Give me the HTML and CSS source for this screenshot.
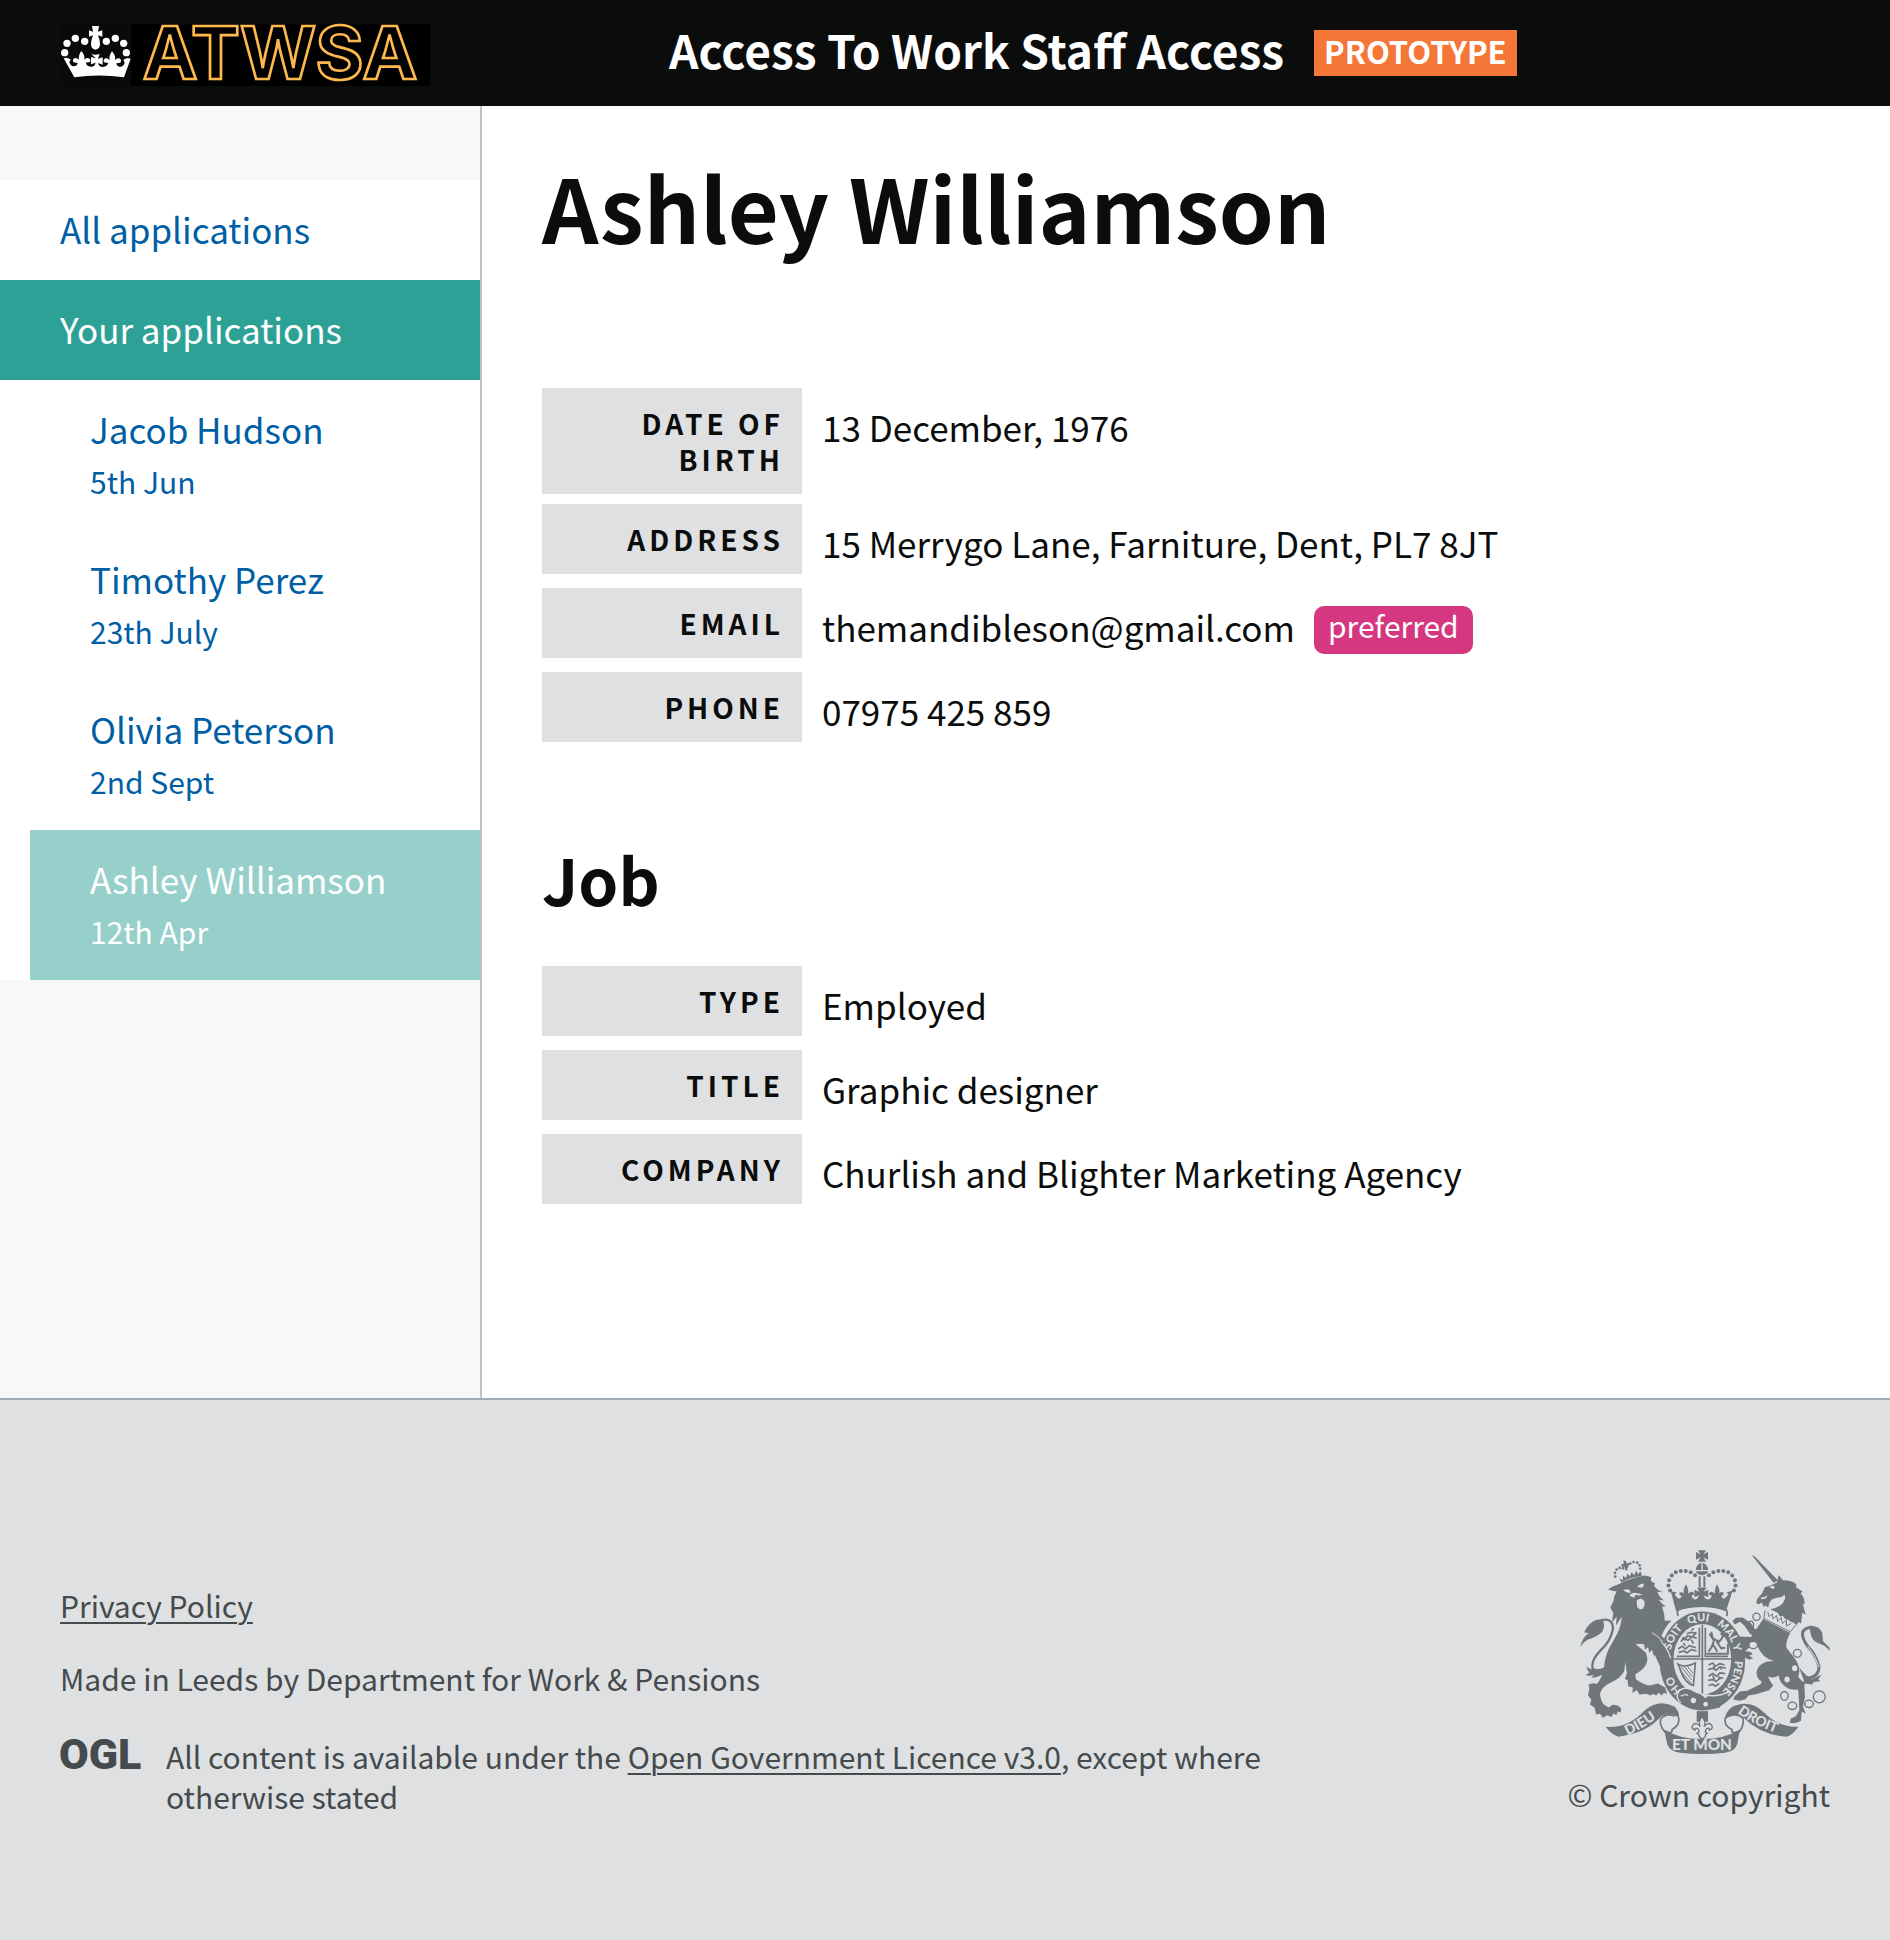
FILE: index.html
```html
<!DOCTYPE html>
<html lang="en">
<head>
<meta charset="utf-8">
<meta name="viewport" content="width=device-width, initial-scale=1">
<title>Ashley Williamson - Access To Work Staff Access</title>
<link rel="stylesheet" href="styles.css">
</head>
<body>
<header class="site-header">
  <a class="logo" href="#" aria-label="ATWSA home">
    <svg class="logo-art" viewBox="60 72 1110 186" aria-hidden="true">
      <rect x="60" y="72" width="213" height="186" fill="#0a0a0a"/>
      <rect x="273" y="72" width="897" height="186" fill="#000"/>
      <g fill="#fff">
        <circle cx="74" cy="158" r="11"/><circle cx="81" cy="130" r="11"/><circle cx="106" cy="115" r="11"/><circle cx="134" cy="124" r="11"/>
        <circle cx="199" cy="124" r="11"/><circle cx="226" cy="115" r="11"/><circle cx="251" cy="130" r="11"/><circle cx="259" cy="158" r="11"/>
        <path d="M156 78h21l-3 17 13-4v19l-13-4q6 14 6 27 0 15-14 16-13-1-13-16 0-13 6-27l-12 4V91l12 4z"/>
        <path d="M154 162q12 4 25 0l-5 14 14-4v22l-14-5q3 12 14 12 14-1 17-12l-13-2q-4-10 6-12 7 0 11 6-3-14 7-27 12 13 9 27 4-7 12-6 10 4 4 13l-12 2q2 11 12 10 10-1 13-12l-4-9 12-5 10 2-20 56q-76-11-149 0L71 175l9-2 12 5-4 9q4 12 13 12 10 0 12-10l-12-2q-6-9 4-13 8 0 12 6-3-14 7-27 12 13 9 27 4-7 11-6 10 3 6 12l-13 2q4 12 17 12 10 0 13-12l-14 5v-22l14 4z"/>
      </g>
      <text class="logo-word" x="720" y="238" text-anchor="middle">ATWSA</text>
    </svg>
  </a>
  <div class="service">
    <span class="service-name">Access To Work Staff Access</span>
    <strong class="phase-tag">PROTOTYPE</strong>
  </div>
</header>

<div class="layout">
  <aside class="sidebar">
    <nav class="nav" aria-label="Applications">
      <a class="nav-link" href="#">All applications</a>
      <a class="nav-link nav-link-current" href="#">Your applications</a>
      <ul class="nav-people">
        <li><a class="person" href="#"><span class="person-name">Jacob Hudson</span><span class="person-date">5th Jun</span></a></li>
        <li><a class="person" href="#"><span class="person-name">Timothy Perez</span><span class="person-date">23th July</span></a></li>
        <li><a class="person" href="#"><span class="person-name">Olivia Peterson</span><span class="person-date">2nd Sept</span></a></li>
        <li><a class="person person-current" href="#" aria-current="page"><span class="person-name">Ashley Williamson</span><span class="person-date">12th Apr</span></a></li>
      </ul>
    </nav>
  </aside>

  <main class="content">
    <h1 class="title">Ashley Williamson</h1>
    <dl class="details">
      <div class="row"><dt>Date of birth</dt><dd>13 December, 1976</dd></div>
      <div class="row"><dt>Address</dt><dd>15 Merrygo Lane, Farniture, Dent, PL7 8JT</dd></div>
      <div class="row"><dt>Email</dt><dd>themandibleson@gmail.com <span class="badge">preferred</span></dd></div>
      <div class="row"><dt>Phone</dt><dd>07975 425 859</dd></div>
    </dl>
    <h2 class="subtitle">Job</h2>
    <dl class="details">
      <div class="row"><dt>Type</dt><dd>Employed</dd></div>
      <div class="row"><dt>Title</dt><dd>Graphic designer</dd></div>
      <div class="row"><dt>Company</dt><dd>Churlish and Blighter Marketing Agency</dd></div>
    </dl>
  </main>
</div>

<footer class="footer">
  <div class="footer-main">
    <p class="footer-line"><a href="#">Privacy Policy</a></p>
    <p class="footer-line">Made in Leeds by Department for Work &amp; Pensions</p>
    <div class="licence">
      <svg class="ogl" viewBox="0 0 81 34" aria-hidden="true">
        <text class="ogl-word" x="-1" y="33">OGL</text>
      </svg>
      <p>All content is available under the <a href="#">Open Government Licence v3.0</a>, except where otherwise stated</p>
    </div>
  </div>
  <a class="copyright" href="#">
    <svg class="crest" viewBox="90 58 750 614" aria-hidden="true">
      <defs>
        <path id="garter" d="M457 508A98 118 0 0 1 457 272A98 118 0 0 1 457 508"/>
        <path id="band-left" d="M232 616Q290 590 340 548"/>
        <path id="band-right" d="M562 548Q616 588 706 618"/>
      </defs>

      <!-- lion -->
      <g transform="translate(75 60)">
        <path class="ink" d="M132 84l6 12q28-18 62-20l-3-14-9 8-5-10-6 14-8-9-5 13-7-9-5 14-8-8-2 14z"/>
        <g class="ink"><circle cx="120" cy="78" r="4"/><circle cx="119" cy="67" r="4"/><circle cx="124" cy="57" r="4"/><circle cx="133" cy="52" r="4"/><circle cx="143" cy="53" r="4"/><circle cx="155" cy="49" r="4"/><circle cx="165" cy="39" r="4"/><circle cx="175" cy="34" r="4"/><circle cx="186" cy="36" r="4"/><circle cx="193" cy="44" r="4"/><circle cx="195" cy="54" r="4"/></g>
        <path class="ink" d="M144 29l8 2 1 7 8-1v8l-7 2 3 12-6 1-4-12-7 2-2-8 8-3z"/>
        <path class="ink" d="M113 107q12-3 22-8 32-18 74-24l19 4-1 12 13 8-4 6q10 14 27 20l-17-1q6 16 20 26l-15-2q9 14 21 19l-11 2 6 22 2 20 20-1q-20 20-30 47l14 12q14 22 12 44l6 16-8-2-4 12-9-8-7 16-6-13-10 2 5-14-8 2 2-14-10 6-6-18-8 10-3-18-10 8-2-16q-14-4-26 0l30 24q10 20 2 36-10 18-33 30l2 14q18 16 42 20l24-6 22 12 6 20-10-4-6 8-9-8-8 8-10-5-6 5-14-5-20 2-8-13-14 8 2-16-14-4-2-18-8-4 6-16-5-34-3 26q-10 22-43 36-26 12-30 34 2 20 12 32l14 8 12-8 16 2 10 10-2 12-8-5-5 12-9-6-5 12-14-6-12 8-9-12-12 2-4-20-14-10 4-14-10-14 4-18-2-14q14-6 24-2 16-16 22-48 2-30 14-56l26-48q10-18 14-50l-18 26 2-26-14 16 4-28-9-16 9-18q2-18 10-30-14-2-26-6z"/>
        <path class="ink" d="M15 291q4-28 25-43l-14-2q14-30 38-38l20 4q6 20-5 34-20 16-43 22-14 8-21 23z"/>
        <path class="line" stroke-width="7" d="M66 212Q114 196 113 236 106 272 78 298 42 334 54 360q26 4 50-18"/>
        <path class="ink" d="M34 348q10 14 22 6 22 12 42-6l2 14q-20 14-36 18l-16 3 7-9q-14 5-25 0 9-3 12-8-8-6-8-18z"/>
        <path class="paper" d="M144 119q12-5 20 0l2 8q-12 1-22-8zM186 108q9-9 20-9l-1 9q-8 7-19 0zM184 151q6-8 16-6l8 8q2 12-4 21-10 6-18-4zM163 136q6-12 24-8l16 5-12 2-9-2-6 9z"/>
        <path class="gap" stroke-width="3" d="M230 247q34 18 50 54"/>
      </g>

      <!-- unicorn -->
      <g transform="translate(570 60)">
        <path class="ink" d="M36 14l8 3 70 72-12 8zM112 95l5-22 12 16q32 0 42 14l-3 6 20 13-5 8q14 14 11 32l-5-2 9 33-10-6-4 32-8-4-6 12-10-12-8 6-6-14-8 4-8-14-10 2-6-12-22-10q24-8 36-18 10-12 7-26-8 8-24 9l-14 4-8 10-4 16-8-8-5 6-6-14-10 6-7-6 4-12 14-16 8-18 20-6z"/>
        <path class="paper" d="M88 110q10-6 17-2l-4 8q-6-4-13-6zM62 142l14-3 8-7-6 12-12 2z"/>
        <path class="gap" stroke-width="4" d="M102 172q32-10 32-36"/>
        <path class="paper" d="M78 174l94 50-18 26-84-42z"/>
        <path class="line" stroke-width="3" d="M76 180l-4 24 80 40 16-20M84 184l4 15 9-9 3 16 10-11 4 18 10-12 4 18 12-10v18l14-8"/>
        <path class="ink" d="M70 206l82 42q-14 22-12 44l20 26q18 20 19 44l-3 18 12 14h10l-4 12 2 34-6 30 8 20-12-6-2 28q-16 10-34 6l3-12 16-8 10-18-2-40-2-22q-26 4-44-14-14-12-13-28-20 10-34 2l8 16 8 12-12 14-40 12-22 4-10 12-18 4-18-4 4-10 16-14 22-2 40-20 4-8q-16-8-16-28 4-24 30-32l22-2q-34-8-50-46l-26 8-10 8 18 4 4 6-10 4 12 8-12 4-16-8-8-22-16-20-10-14 16-6 40 2z"/>
        <path class="ink" d="M56 258l-24-6-18-26-14-12-16 8-6-10 10-10 20-1 24 16 12 18 16 4z"/>
        <path class="line" stroke-width="9" d="M200 384q38-2 38-36-10-36-34-60-34-50 6-57"/>
        <path class="gap" stroke-width="3" d="M238 350q-8-30-34-62"/>
        <path class="ink" d="M208 226q30-2 40 22l2 24 20 20v9q-14-16-28-20-28-8-30-36zM178 352l22 24 18 10 28-13-10 14 6 6-20 2-4 8-22-3z"/>
        <g class="line" stroke-width="4"><ellipse cx="50" cy="199" rx="11" ry="11"/><ellipse cx="33" cy="224" rx="8" ry="12"/><ellipse class="ringed" cx="40" cy="284" rx="13" ry="11"/><ellipse class="ringed" cx="173" cy="309" rx="12" ry="12"/><ellipse cx="134" cy="437" rx="11" ry="13"/><ellipse cx="158" cy="467" rx="13" ry="11"/><ellipse cx="208" cy="461" rx="13" ry="11"/><circle cx="239" cy="440" r="18"/></g>
        <ellipse class="paper" cx="165" cy="354" rx="8" ry="9"/><ellipse class="paper" cx="142" cy="388" rx="8" ry="9"/>
      </g>

      <!-- imperial crown -->
      <g transform="translate(300 45)">
        <path class="ink" d="M144 14h24l-8 12 14-7v23l-14-7 8 13h-24l8-13-14 7V19l14 7zM137 73q2-18 17-22v22zM158 51q14 4 17 22h-17zM137 77h38q-4 11-19 12-15-1-19-12z"/>
        <path class="line" stroke-width="6" d="M149 92v32M163 92v32"/>
        <g class="ink"><circle cx="135" cy="89" r="6"/><circle cx="122" cy="80" r="6"/><circle cx="107" cy="76" r="6"/><circle cx="92" cy="76" r="6"/><circle cx="77" cy="80" r="6"/><circle cx="65" cy="90" r="6"/><circle cx="57" cy="104" r="6"/><circle cx="55" cy="120" r="6"/><circle cx="60" cy="135" r="6"/>
        <circle cx="177" cy="89" r="6"/><circle cx="190" cy="80" r="6"/><circle cx="205" cy="76" r="6"/><circle cx="220" cy="76" r="6"/><circle cx="235" cy="80" r="6"/><circle cx="247" cy="90" r="6"/><circle cx="255" cy="104" r="6"/><circle cx="257" cy="120" r="6"/><circle cx="252" cy="135" r="6"/></g>
        <path class="ink" d="M142 126h28l-9 13 14-6v22l-14-5q4 12 14 12 9-2 10-12l-8-2q0-10 9-9l9 5q-2-12 6-28 10 16 7 28 6-7 12-3 4 8-6 10 2 10 10 8l12-12-6-6 18-6-20 62q-74-26-150 0l-16-60 18 4-6 6 10 12q9 2 11-8-10-2-6-10 7-3 12 3-3-12 7-28 9 16 6 28l9-5q9-1 9 9l-8 2q2 10 10 12 9 0 13-12l-14 5v-22l14 6z"/>
        <path class="line" stroke-width="5" d="M84 212q-8-22 14-24 58-12 116 0 24 2 16 24"/>
      </g>

      <!-- garter and shield -->
      <ellipse class="ink" cx="457" cy="392" rx="129" ry="149"/>
      <path class="gap" stroke-width="4" d="M326 330q24 16 36 54"/>
      <ellipse class="paper" cx="457" cy="387" rx="87" ry="106"/>
      <path class="line" stroke-width="5" d="M457 282v212M370 386h175M380 378h68V292M466 292v86h68"/>
      <g class="line" stroke-width="5">
        <path d="M392 334l10-12 12 8 12-12 14 6M396 322l8 6 8-12 14 4 12-12M384 356l12-8 10 8 12-10 20 6M386 366l16-4 8 6 14-10 16 4M400 338l6 8M424 328l6 12M410 310l12-4 18 2M424 300l8-6"/>
        <path d="M476 404l12-6 8 10 14-8 14 4M474 418l14-4 10 6 12-10 18 4M476 438l12-8 12 8 10-10 16 2M474 450l14-2 10 6 14-12 8 2M476 466l12-4 8 6 12-8M490 408l4 8M512 408l2 10M488 436l6 12M506 438l4 10"/>
        <path stroke-width="6" d="M478 310l14 20-6 18-10 16M484 304l4 20 20 10 12-16-8-10M500 334l14 20 12-2M488 340l14 24M470 370h64V340"/>
        <path d="M384 402q22 12 52-4l-6 68q-28-8-42-56z"/>
        <path stroke-width="3" d="M394 410l32 40M402 408l24 30M412 408l16 20M392 422l32 38"/>
      </g>
      <g class="motto">
        <text><textPath href="#garter" startOffset="96" text-anchor="middle">HO</textPath></text>
        <text><textPath href="#garter" startOffset="238" text-anchor="middle">SOIT</textPath></text>
        <text><textPath href="#garter" startOffset="328" text-anchor="middle">QUI</textPath></text>
        <text><textPath href="#garter" startOffset="434" text-anchor="middle">MAL Y</textPath></text>
        <text><textPath href="#garter" startOffset="562" text-anchor="middle">PENSE</textPath></text>
      </g>
      <path class="ink" d="M386 486q10-16 32-10 50 32 112 12l-20 44q-50 14-116-12-14-16-8-34z"/>
      <path class="gap" stroke-width="4" d="M392 518q-18-18-6-34 12-16 38-6 56 34 116 6M392 498q14-8 22-2"/>
      <path class="paper" d="M452 492l28 2-14 10z"/>
      <circle class="paper" cx="430" cy="511" r="8"/><circle class="paper" cx="467" cy="522" r="7"/>

      <!-- lion's forepaw over the garter -->
      <path class="ink" d="M300 310q40 20 54 62l12 32-10-2-2 14-10-10-8 12-8-14-14-30z"/>

      <!-- motto ribbon -->
      <path class="ink" d="M440 543h34v32h-34z"/>
      <path class="line fleur" stroke-width="4" d="M456 560q14 14 6 30 10-16 22-6 8 12-6 16 2-6-4-6-8 2-8 12l6 4-6 4q2 8-10 12-10-4-9-12l-6-4 6-4q0-10-8-12-6 0-4 6-14-4-6-16 12-10 22 6-8-16 5-30z"/>
      <path class="ink" d="M166 590q66 6 118-50 44-36 90-10 16 18 12 34-20-22-52-6-44 52-130 62-22-8-38-30z"/>
      <path class="ink" d="M746 590q-60 2-104-44-46-42-98-14-20 18-18 36 24-24 52-8 56 56 132 60 18-4 36-30z"/>
      <path class="line" stroke-width="5" d="M386 562q4 24-20 36 2 14-22 8-18-22-12-40 16-18 42-8M526 562q-6 24 20 36-4 14 22 8 14-18 12-40-16-18-42-8"/>
      <path class="ink" d="M342 598q50 30 114 29 64 1 114-29l-8 44q-6 22-36 26-70 8-136 0-30-4-38-24z"/>
      <g class="band">
        <text><textPath href="#band-left">DIEU</textPath></text>
        <text><textPath href="#band-right">DROIT</textPath></text>
        <text x="456" y="661" text-anchor="middle" class="band-mid">ET MON</text>
      </g>
    </svg>
    <span>© Crown copyright</span>
  </a>
</footer>
</body>
</html>
```
FILE: styles.css
```css
* {
  box-sizing: border-box;
}

body {
  margin: 0;
  min-height: 100vh;
  display: flex;
  flex-direction: column;
  background: #fff;
  color: #0b0c0c;
  font-family: "Noto Sans CJK SC", "Noto Sans", sans-serif;
  font-size: 35px;
  line-height: 50px;
}

p,
dl,
dd,
ul,
h1,
h2 {
  margin: 0;
  padding: 0;
}

svg {
  overflow: visible;
}

/* Header */
.site-header {
  display: grid;
  grid-template-columns: 609px 1fr;
  align-items: start;
  padding: 24px 60px 20px;
  background: #0b0c0c;
  color: #fff;
}

.logo,
.logo-art {
  display: block;
}

.logo-art {
  width: 370px;
  height: 62px;
}

.logo-word {
  fill: #000;
  stroke: #ffb84d;
  stroke-width: 8px;
  font-family: Inter, sans-serif;
  font-size: 220px;
  font-weight: 700;
}

.service {
  display: flex;
  align-items: flex-start;
  gap: 30px;
}

.service-name {
  font-size: 46px;
  font-weight: 700;
}

.phase-tag {
  margin-top: 6px;
  padding: 0 10px 4px;
  background: #f47738;
  font-size: 31px;
  font-weight: 700;
  line-height: 42px;
}

/* Page columns */
.layout {
  flex: 1;
  display: flex;
}

.sidebar {
  flex: 0 0 482px;
  padding-top: 74px;
  border-right: 2px solid #bfc1c3;
  background: #f8f8f8;
}

.nav {
  background: #fff;
}

.nav-link,
.person {
  display: block;
  color: #005ea5;
  text-decoration: none;
}

.nav-link {
  padding: 24px 60px 26px;
}

.nav-link-current {
  background: #2ea196;
  color: #fff;
}

.nav-people {
  padding-left: 30px;
  list-style: none;
}

.person {
  padding: 24px 60px 22px;
}

.person-current {
  background: #97d0cb;
  color: #fff;
}

.person-name,
.person-date {
  display: block;
}

.person-date {
  font-size: 30px;
  line-height: 54px;
}

.content {
  flex: 1;
  padding: 50px 60px 180px;
}

.title {
  margin-bottom: 132px;
  font-size: 88px;
  font-weight: 700;
  line-height: 100px;
}

.subtitle {
  margin: 82px 0 48px;
  font-size: 64px;
  font-weight: 700;
  line-height: 80px;
}

.row {
  display: flex;
  align-items: flex-start;
  min-height: 84px;
}

dt {
  flex: 0 0 260px;
  margin: 0 20px 10px 0;
  padding: 17px 18px 17px 20px;
  background: #dee0e2;
  font-size: 28px;
  font-weight: 700;
  letter-spacing: 4px;
  line-height: 36px;
  text-align: right;
  text-transform: uppercase;
}

dd {
  display: flex;
  align-items: flex-start;
  gap: 19px;
  padding: 14px 0 18px;
}

.badge {
  margin-top: 4px;
  padding: 0 14px 10px;
  border-radius: 10px;
  background: #d53880;
  color: #fff;
  font-size: 30px;
  line-height: 38px;
}

/* Footer */
.footer {
  display: flex;
  align-items: flex-start;
  justify-content: space-between;
  padding: 150px 60px 124px;
  border-top: 2px solid #a1acb2;
  background: #dee0e2;
  color: #454a4c;
  font-size: 30px;
  line-height: 40px;
}

.footer a {
  color: inherit;
  text-decoration-thickness: 2px;
  text-underline-offset: 4px;
}

.footer-main {
  flex: 0 1 1270px;
  padding-top: 35px;
}

.footer-line {
  margin-bottom: 33px;
}

.licence {
  display: flex;
  align-items: flex-start;
  gap: 25px;
  padding-top: 5px;
}

.ogl {
  flex: none;
  width: 81px;
  height: 34px;
}

.ogl-word {
  fill: #454a4c;
  font-family: Roboto, sans-serif;
  font-size: 43px;
  font-weight: 900;
}

.footer .copyright {
  display: flex;
  flex-direction: column;
  align-items: flex-end;
  gap: 20px;
  text-decoration: none;
}

.crest {
  width: 250px;
  height: 204px;
}

.ink {
  fill: #6f777b;
}

.paper {
  fill: #dee0e2;
}

.line {
  fill: none;
  stroke: #6f777b;
}

.gap {
  fill: none;
  stroke: #dee0e2;
}

.ringed,
.fleur {
  fill: #dee0e2;
}

.motto,
.band {
  fill: #dee0e2;
  font-family: Lato, sans-serif;
  font-weight: 900;
}

.motto {
  font-size: 33px;
}

.band {
  font-size: 42px;
}

.band-mid {
  font-size: 46px;
}
```
